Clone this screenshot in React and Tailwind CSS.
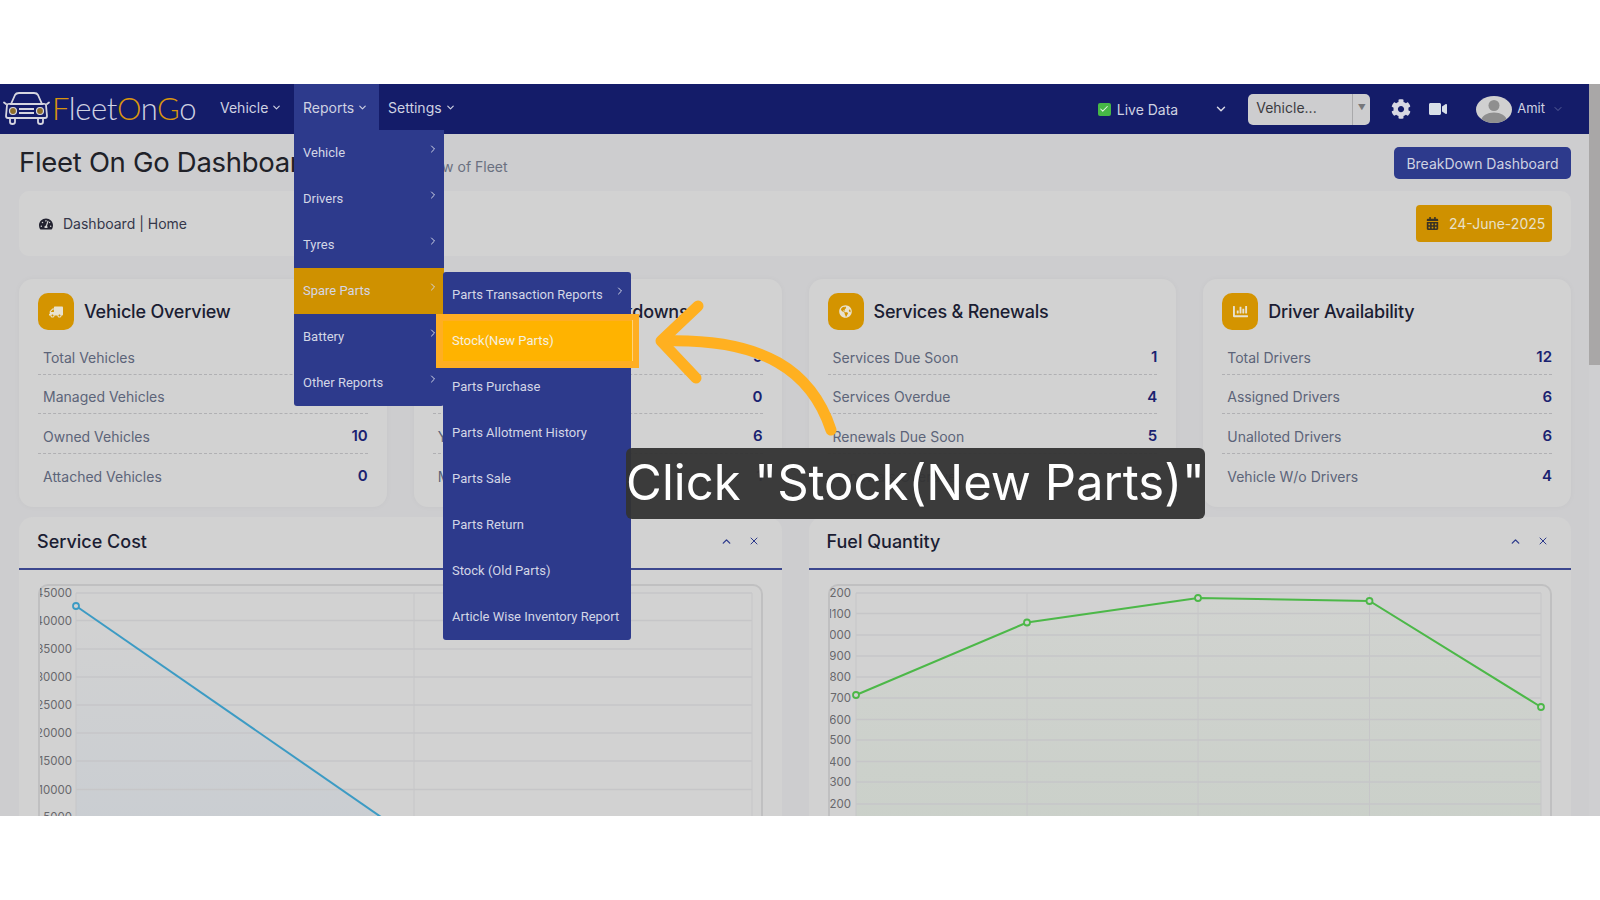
import React from "react";
import { ChevronDown, ChevronRight, ChevronUp, X, Check } from "lucide-react";
import { FaTachometerAlt, FaTruck, FaGlobeAmericas, FaChartBar, FaCalendarAlt, FaCog, FaVideo } from "react-icons/fa";

function CarLogo() {
  return (
    <svg width="47" height="34" viewBox="0 0 47 34" fill="none" stroke="#d6d6e0" strokeWidth="1.8" strokeLinejoin="round" strokeLinecap="round">
      <path d="M8 13 L12 4 Q13 2 16 2 H31 Q34 2 35 4 L39 13" />
      <path d="M4 14 Q4 12.5 8 13 H39 Q43 12.5 43 14 L44 25 Q44 27 42 27 H5 Q3 27 3 25 Z" />
      <path d="M7 27 V31 Q7 33 9.500 33 Q12 33 12 31 V27 M35 27 V31 Q35 33 37.500 33 Q40 33 40 31 V27" />
      <path d="M3 13 L1 11.500 M44 13 L46 11.500" />
      <rect x="16" y="17" width="15" height="2" fill="#d6d6e0" stroke="none" />
      <rect x="16" y="21" width="15" height="2" fill="#d6d6e0" stroke="none" />
      <circle cx="10" cy="20" r="3.500" fill="#8c6d2a" stroke="#d6d6e0" strokeWidth="1.200" />
      <circle cx="37" cy="20" r="3.500" fill="#8c6d2a" stroke="#d6d6e0" strokeWidth="1.200" />
    </svg>
  );
}

function Avatar() {
  return (
    <svg width="36" height="27" viewBox="0 0 36 27">
      <defs>
        <clipPath id="av"><ellipse cx="18" cy="13.500" rx="18" ry="13.500" /></clipPath>
      </defs>
      <ellipse cx="18" cy="13.500" rx="18" ry="13.500" fill="#d0d0d0" />
      <g clipPath="url(#av)" fill="#8f8f8f">
        <ellipse cx="18" cy="9.500" rx="5.500" ry="5.500" />
        <ellipse cx="18" cy="24" rx="12.500" ry="7.500" />
      </g>
    </svg>
  );
}

function MenuItem({ label, active }) {
  return (
    <div className={`flex h-[46px] items-center justify-between pl-[9px] pr-[5px] ${active ? "bg-[#cf9100]" : ""}`}>
      <span className="text-[13px] text-[#d3d6e6]">{label}</span>
      <ChevronRight size={12} strokeWidth={2} className="-mt-2 text-[#d3d6e6]" />
    </div>
  );
}

function SubMenu() {
  const rest = ["Parts Purchase", "Parts Allotment History", "Parts Sale", "Parts Return", "Stock (Old Parts)", "Article Wise Inventory Report"];
  return (
    <div className="absolute left-[149px] top-[4px] z-20 w-[188px] rounded-[3px] bg-[#2d3a8c] [font-family:Roboto,sans-serif]">
      <MenuItem label="Parts Transaction Reports" />
      <div className="relative h-[46px]">
        <div className="absolute -bottom-[4px] -left-[7px] -right-[8px] -top-[4px] flex items-center border-[7px] border-[#ffae22] bg-[#ffb300] pl-[9px]">
          <span className="text-[13px] text-[#f4f0e2]">Stock(New Parts)</span>
          <div className="absolute -right-[1px] -top-[1px] bottom-0 w-px bg-[#ffd27a]" />
        </div>
      </div>
      {rest.map((t) => (
        <div key={t} className="flex h-[46px] items-center pl-[9px] text-[13px] text-[#d3d6e6]">{t}</div>
      ))}
    </div>
  );
}

function NavBar() {
  const main = ["Vehicle", "Drivers", "Tyres", "Spare Parts", "Battery", "Other Reports"];
  return (
    <div className="flex h-[50px] items-start bg-[#141c69] text-[#cfd2e2]">
      <div className="flex h-[50px] w-[211px] items-center pb-[2px] pl-[3px]">
        <CarLogo />
        <span className="ml-[2px] text-[31px] font-light leading-none tracking-[-0.4px] [font-family:Lato,sans-serif]">
          <span className="text-[#d9950f]">F</span>leet<span className="text-[#d9950f]">O</span>n<span className="text-[#d9950f]">G</span>o
        </span>
      </div>
      <div className="flex h-[46px] w-[83px] items-center gap-[3px] pl-[9px] text-[14px]">
        Vehicle <ChevronDown size={11} strokeWidth={2.500} />
      </div>
      <div className="relative flex h-[46px] w-[85px] items-center gap-[3px] bg-[#2d3a8c] pl-[9px] text-[14px]">
        Reports <ChevronDown size={11} strokeWidth={2.500} />
        <div className="absolute left-0 top-[46px] z-10 w-[150px] rounded-b-[3px] bg-[#2d3a8c] [font-family:Roboto,sans-serif]">
          {main.map((m) => (
            <div key={m} className="relative">
              <MenuItem label={m} active={m === "Spare Parts"} />
            </div>
          ))}
          <div className="absolute left-0 top-[138px] h-0 w-full">
            <SubMenu />
          </div>
        </div>
      </div>
      <div className="flex h-[46px] items-center gap-[3px] pl-[9px] text-[14px]">
        Settings <ChevronDown size={11} strokeWidth={2.500} />
      </div>
      <div className="ml-auto flex h-[50px] items-center pr-[25px]">
        <span className="flex h-[13px] w-[13px] items-center justify-center rounded-[2px] bg-[#46b846]">
          <Check size={10} strokeWidth={2.500} className="text-[#e4f3e4]" />
        </span>
        <span className="ml-[6px] text-[14px]">Live Data</span>
        <ChevronDown size={14} strokeWidth={2.500} className="ml-[36px] text-[#d8d8e4]" />
        <div className="ml-[20px] flex h-[31px] w-[122px] items-stretch rounded-[5px] bg-[#cdcdcf] text-[#3b3b3f]">
          <div className="flex w-[104px] items-center pb-[4px] pl-[8px] text-[14px]">Vehicle...</div>
          <div className="flex flex-1 items-center justify-center border-l border-[#a9a9ab] pb-[4px] text-[8px] text-[#77777a]">▼</div>
        </div>
        <FaCog size={20} className="ml-[21px] text-[#d8d8e2]" />
        <FaVideo size={18} className="ml-[18px] text-[#d8dfe8]" />
        <div className="ml-[29px]"><Avatar /></div>
        <span className="ml-[5px] text-[13px]">Amit</span>
        <ChevronDown size={12} strokeWidth={1.500} className="ml-[7px] text-[#727aa8]" />
      </div>
    </div>
  );
}

function StatCard({ title, icon, rows }) {
  return (
    <div className="rounded-[14px] bg-[#d2d2d2] px-[19px] pb-[14px] pt-[14px] shadow-[0_0_6px_rgba(0,0,0,0.03)]">
      <div className="flex h-[37px] items-center">
        <div className="flex h-[37px] w-[36px] items-center justify-center rounded-[10px] bg-[#d49400] text-[#e8e2d0]">{icon}</div>
        <span className="ml-[10px] text-[18px] font-medium tracking-[-0.2px] text-[#1b1d33]">{title}</span>
      </div>
      <div className="mt-[5px]">
        {rows.map(([l, v], i) => (
          <div key={l} className={`flex h-[39.5px] items-center justify-between pl-[5px] pt-[6px] ${i < 3 ? "border-b border-dashed border-[#b0b0b3]" : ""}`}>
            <span className="text-[14px] text-[#5c6479]">{l}</span>
            <span className="text-[15px] font-semibold text-[#1a2270]">{v}</span>
          </div>
        ))}
      </div>
    </div>
  );
}

function ChartCard({ title, children }) {
  return (
    <div className="h-[320px] rounded-t-[14px] bg-[#d2d2d2]">
      <div className="flex h-[53px] items-center justify-between border-b-2 border-[#3c478e] pb-[3px] pl-[18px] pr-[22px]">
        <span className="text-[18px] font-medium text-[#1b1d33]">{title}</span>
        <div className="flex items-center gap-[15px] text-[#2d3a8c]">
          <ChevronUp size={13} strokeWidth={2.500} />
          <X size={12} strokeWidth={2} />
        </div>
      </div>
      <div className="mx-[19px] mt-[14px] h-[260px] rounded-[10px] border-2 border-[#c0c0c1]">{children}</div>
    </div>
  );
}

const GRID = "#c6c6c8";

function ServiceChart() {
  const ys = [[45000, 593], [40000, 620.5], [35000, 649], [30000, 677], [25000, 705], [20000, 733], [15000, 761], [10000, 789.5], [5000, 817]];
  const ox = 39, oy = 586;
  return (
    <svg width="721" height="256" className="block">
      <defs>
        <linearGradient id="blueFill" x1="0" y1="0" x2="0" y2="1">
          <stop offset="0" stopColor="#d2d2d2" />
          <stop offset="1" stopColor="#c7ccd2" />
        </linearGradient>
      </defs>
      <path d={`M${75 - ox} ${606 - oy} L${500 - ox} ${900 - oy} H${75 - ox} Z`} fill="url(#blueFill)" />
      {ys.map(([l, y]) => (
        <g key={l}>
          <line x1={75 - ox} x2={751 - ox} y1={y - oy} y2={y - oy} stroke={GRID} strokeWidth="1.500" />
          <text x={71 - ox} y={y - oy + 4} textAnchor="end" fontSize="11.500" fill="#68686c">{l}</text>
        </g>
      ))}
      {[75, 413, 751].map((x) => (
        <line key={x} x1={x - ox} x2={x - ox} y1={593 - oy} y2="256" stroke={GRID} />
      ))}
      <line x1={75 - ox} y1={606 - oy} x2={500 - ox} y2={900 - oy} stroke="#3c9bc4" strokeWidth="2" />
      <circle cx={75 - ox} cy={606 - oy} r="3" fill="#d2d2d2" stroke="#3c9bc4" strokeWidth="1.800" />
    </svg>
  );
}

function FuelChart() {
  const ys = [[1200, 593], [1100, 613.5], [1000, 635], [900, 656], [800, 677], [700, 698], [600, 719.5], [500, 740], [400, 761.5], [300, 782], [200, 804]];
  const ox = 830, oy = 586;
  const pts = [[856, 695], [1027, 622.5], [1198, 598], [1369.5, 601], [1541, 707]].map(([x, y]) => [x - ox, y - oy]);
  const line = pts.map((p) => p.join(",")).join(" ");
  return (
    <svg width="721" height="256" className="block">
      <defs>
        <linearGradient id="greenFill" x1="0" y1="0" x2="0" y2="1">
          <stop offset="0" stopColor="#d1d3d0" />
          <stop offset="1" stopColor="#cad0c9" />
        </linearGradient>
      </defs>
      <polygon points={`${line} ${1541 - ox},256 ${856 - ox},256`} fill="url(#greenFill)" />
      {ys.map(([l, y]) => (
        <g key={l}>
          <line x1={856 - ox} x2={1541 - ox} y1={y - oy} y2={y - oy} stroke={GRID} strokeWidth="1.500" />
          <text x={851 - ox} y={y - oy + 4} textAnchor="end" fontSize="11.500" fill="#68686c">{l}</text>
        </g>
      ))}
      {[856, 1027, 1198, 1369.5, 1541].map((x) => (
        <line key={x} x1={x - ox} x2={x - ox} y1={593 - oy} y2="256" stroke={GRID} />
      ))}
      <polyline points={line} fill="none" stroke="#4cb848" strokeWidth="2" />
      {pts.map(([x, y]) => (
        <circle key={x} cx={x} cy={y} r="3" fill="#d2d2d2" stroke="#4cb848" strokeWidth="1.800" />
      ))}
    </svg>
  );
}

export default function App() {
  return (
    <div className="flex h-[900px] flex-col overflow-hidden bg-white [font-family:Inter,sans-serif]">
      <div className="h-[84px]" />
      <div className="relative flex h-[732px] overflow-hidden bg-[#cdcdcf]">
        <div className="min-w-0 flex-1">
          <NavBar />
          <div className="pl-[19px] pr-[18px] pt-[13px]">
            <div className="flex h-[32px] items-center justify-between">
              <div className="flex items-baseline">
                <span className="w-[372px] text-[27.500px] leading-none tracking-[-0.3px] text-[#202128]">Fleet On Go Dashboard</span>
                <span className="text-[14px] text-[#6a7080]">Overview of Fleet</span>
              </div>
              <button className="h-[32px] w-[177px] rounded-[5px] bg-[#2d3a8c] text-[14px] text-[#cfd2e2]">BreakDown Dashboard</button>
            </div>
            <div className="mt-[12px] flex h-[65px] items-center justify-between rounded-[10px] bg-[#d2d2d2] pl-[20px] pr-[19px]">
              <div className="flex items-center text-[14px] text-[#35374a]">
                <FaTachometerAlt size={14} className="text-[#222230]" />
                <span className="ml-[10px]">Dashboard | Home</span>
              </div>
              <div className="flex h-[37px] w-[136px] items-center rounded-[4px] bg-[#cf9100] pl-[10px] text-[14px] text-[#e8e0c8]">
                <FaCalendarAlt size={13} className="text-[#3a3324]" />
                <span className="ml-[10px]">24-June-2025</span>
              </div>
            </div>
            <div className="mt-[23px] grid grid-cols-4 gap-[27px]">
              <StatCard title="Vehicle Overview" icon={<FaTruck size={14} className="-scale-x-100" />} rows={[["Total Vehicles", "10"], ["Managed Vehicles", "0"], ["Owned Vehicles", "10"], ["Attached Vehicles", "0"]]} />
              <StatCard title="Vehicle Live Breakdowns" icon={<FaTruck size={14} />} rows={[["Total Breakdowns", "9"], ["Open Breakdowns", "0"], ["Yearly Breakdowns", "6"], ["Monthly Breakdowns", "1"]]} />
              <StatCard title="Services & Renewals" icon={<FaGlobeAmericas size={13} />} rows={[["Services Due Soon", "1"], ["Services Overdue", "4"], ["Renewals Due Soon", "5"], ["Renewals Overdue", "8"]]} />
              <StatCard title="Driver Availability" icon={<FaChartBar size={15} />} rows={[["Total Drivers", "12"], ["Assigned Drivers", "6"], ["Unalloted Drivers", "6"], ["Vehicle W/o Drivers", "4"]]} />
            </div>
            <div className="mt-[10px] grid grid-cols-2 gap-[27px]">
              <ChartCard title="Service Cost"><ServiceChart /></ChartCard>
              <ChartCard title="Fuel Quantity"><FuelChart /></ChartCard>
            </div>
          </div>
        </div>
        <div className="flex w-[11px] flex-col bg-[#cfcfd1]">
          <div className="h-[281px] bg-[#a9a7a7]" />
        </div>

        <svg className="absolute left-[640px] top-[210px] z-30" width="210" height="150" viewBox="640 294 210 150" fill="none" stroke="#ffb020" strokeWidth="11" strokeLinecap="round" strokeLinejoin="round">
          <path d="M831 430 C812 372 765 338 663 341" />
          <path d="M698 306 L661 341 L696 378" />
        </svg>
        <div className="absolute left-[626px] top-[364px] z-30 flex h-[71px] w-[579px] items-center justify-center rounded-[6px] bg-[#333333]/95 pb-[2px] text-[49px] leading-none text-white">
          Click "Stock(New Parts)"
        </div>
      </div>
      <div className="flex-1" />
    </div>
  );
}
